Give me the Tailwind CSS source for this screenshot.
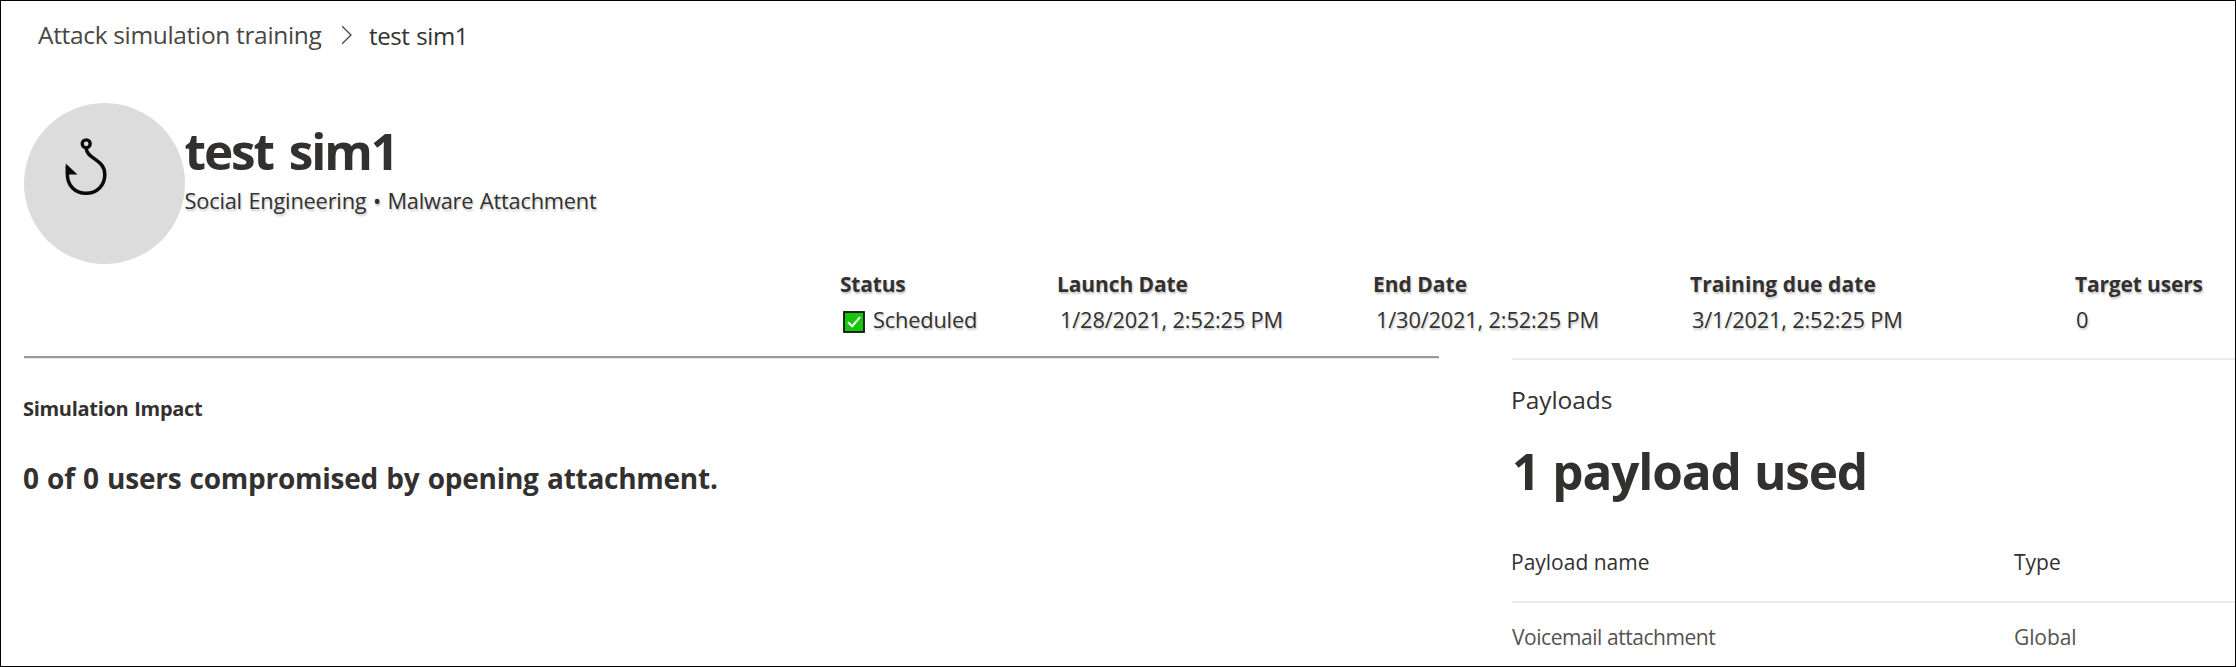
<!DOCTYPE html>
<html lang="en">
<head>
<meta charset="utf-8">
<title>Attack simulation training - test sim1</title>
<script src="https://cdn.jsdelivr.net/npm/@tailwindcss/browser@4"></script>
</head>
<body class="h-[667px] w-[2236px] overflow-hidden border border-black bg-white font-['Open_Sans','Noto_Sans',sans-serif] text-[#323130]">
  <nav class="flex h-[102px] items-start pt-[18px] pl-[37px] leading-8 whitespace-nowrap">
    <a class="w-[303px] text-[24.5px] tracking-[-0.33px] text-[#484644]">Attack simulation training</a>
    <svg class="mt-[6px] h-5 w-3" viewBox="0 0 12 20" fill="none" stroke="#484644" stroke-width="1.3"><path d="M1.2 1.2 10 10 1.2 18.8"/></svg>
    <span class="mt-px ml-[16px] text-[24px] tracking-[-0.4px] [word-spacing:1px]">test sim1</span>
  </nav>

  <header class="flex h-[161px] pl-[22.5px]">
    <div class="size-[161px] shrink-0 rounded-full bg-[#dcdcdc]">
      <svg class="mt-[33px] ml-[38px] h-[60px] w-[48px]" viewBox="0 0 48 60" fill="none" stroke="#0a0a0a">
        <circle cx="24.2" cy="7.8" r="4" stroke-width="3.3"/>
        <path stroke-width="3.5" d="M24.2 12.5C24.8 23 42.8 23 42.8 38.5C42.8 50 34.5 57.3 24 57.3C13 57.3 5.3 50 5.3 37.5V30"/>
        <path fill="#0a0a0a" stroke="none" d="M3.7 27.5 15.5 38.4H4.4z"/>
      </svg>
    </div>
    <div class="pt-[18px] whitespace-nowrap">
      <h1 class="text-[49.5px] leading-[60px] font-bold tracking-[-2.1px] [word-spacing:5px]">test sim1</h1>
      <p class="mt-[6px] text-[21.8px] leading-7 tracking-[-0.2px] [word-spacing:1px] text-shadow-[1px_2px_2px_rgb(0_0_0/0.22)]">Social Engineering • Malware Attachment</p>
    </div>
  </header>

  <dl class="flex pt-[5px] pl-[839px] text-[21.8px] leading-[30px] tracking-[-0.18px] whitespace-nowrap text-shadow-[1px_2px_2px_rgb(0_0_0/0.22)]">
    <div class="w-[217px]">
      <dt class="text-[21px] font-bold tracking-[-0.2px]">Status</dt>
      <dd class="mt-[6px] flex items-center pl-[3px]">
        <svg class="mt-[3px] h-[22px] w-[22px]" viewBox="0 0 22 22"><rect x="1" y="1" width="20" height="20" fill="#16c60c" stroke="#101010" stroke-width="1.8"/><path d="M5 11.2 9.2 15.2 17 6.2" fill="none" stroke="#fff" stroke-width="2"/></svg>
        <span class="ml-[8px]">Scheduled</span>
      </dd>
    </div>
    <div class="w-[316px]">
      <dt class="text-[21px] font-bold tracking-[-0.1px]">Launch Date</dt>
      <dd class="mt-[6px] pl-[3px]">1/28/2021, 2:52:25 PM</dd>
    </div>
    <div class="w-[317px]">
      <dt class="text-[21px] font-bold tracking-[0px]">End Date</dt>
      <dd class="mt-[6px] pl-[3px]">1/30/2021, 2:52:25 PM</dd>
    </div>
    <div class="w-[385px]">
      <dt class="text-[21px] font-bold tracking-[0.08px]">Training due date</dt>
      <dd class="mt-[6px] pl-[2px]">3/1/2021, 2:52:25 PM</dd>
    </div>
    <div>
      <dt class="text-[21px] font-bold tracking-[-0.17px]">Target users</dt>
      <dd class="mt-[6px] pl-px">0</dd>
    </div>
  </dl>

  <main class="flex justify-between pt-[21px] pl-[23px] whitespace-nowrap">
    <section class="w-[1415px]">
      <hr class="h-[3px] border-0 border-t-2 border-[#9a9a9a] bg-[#e8e8e8]">
      <h2 class="mt-[36px] -ml-px text-[20px] leading-7 font-bold tracking-[-0.3px] [word-spacing:1px]">Simulation Impact</h2>
      <p class="mt-[35px] -ml-px text-[28px] leading-10 font-bold tracking-[-0.26px] [word-spacing:1.3px]">0 of 0 users compromised by opening attachment.</p>
    </section>
    <section class="mt-[2px] w-[723px] border-t-2 border-[#ebebeb]">
      <h2 class="mt-[23px] -ml-px text-[24.5px] leading-[34px] font-medium tracking-[-0.07px]">Payloads</h2>
      <p class="mt-[22px] text-[49.5px] leading-[64px] font-bold tracking-[-1.15px] [word-spacing:1.5px]">1 payload used</p>
      <div class="mt-[44px] flex h-[56px] border-b-2 border-[#ebebeb] text-[21px] leading-[30px] font-medium">
        <span class="-ml-px w-[503px]">Payload name</span>
        <span>Type</span>
      </div>
      <div class="mt-[19px] flex text-[21px] leading-[30px] tracking-[-0.45px] text-[#555350]">
        <span class="w-[502px]">Voicemail attachment</span>
        <span class="tracking-[-0.1px]">Global</span>
      </div>
    </section>
  </main>
</body>
</html>
